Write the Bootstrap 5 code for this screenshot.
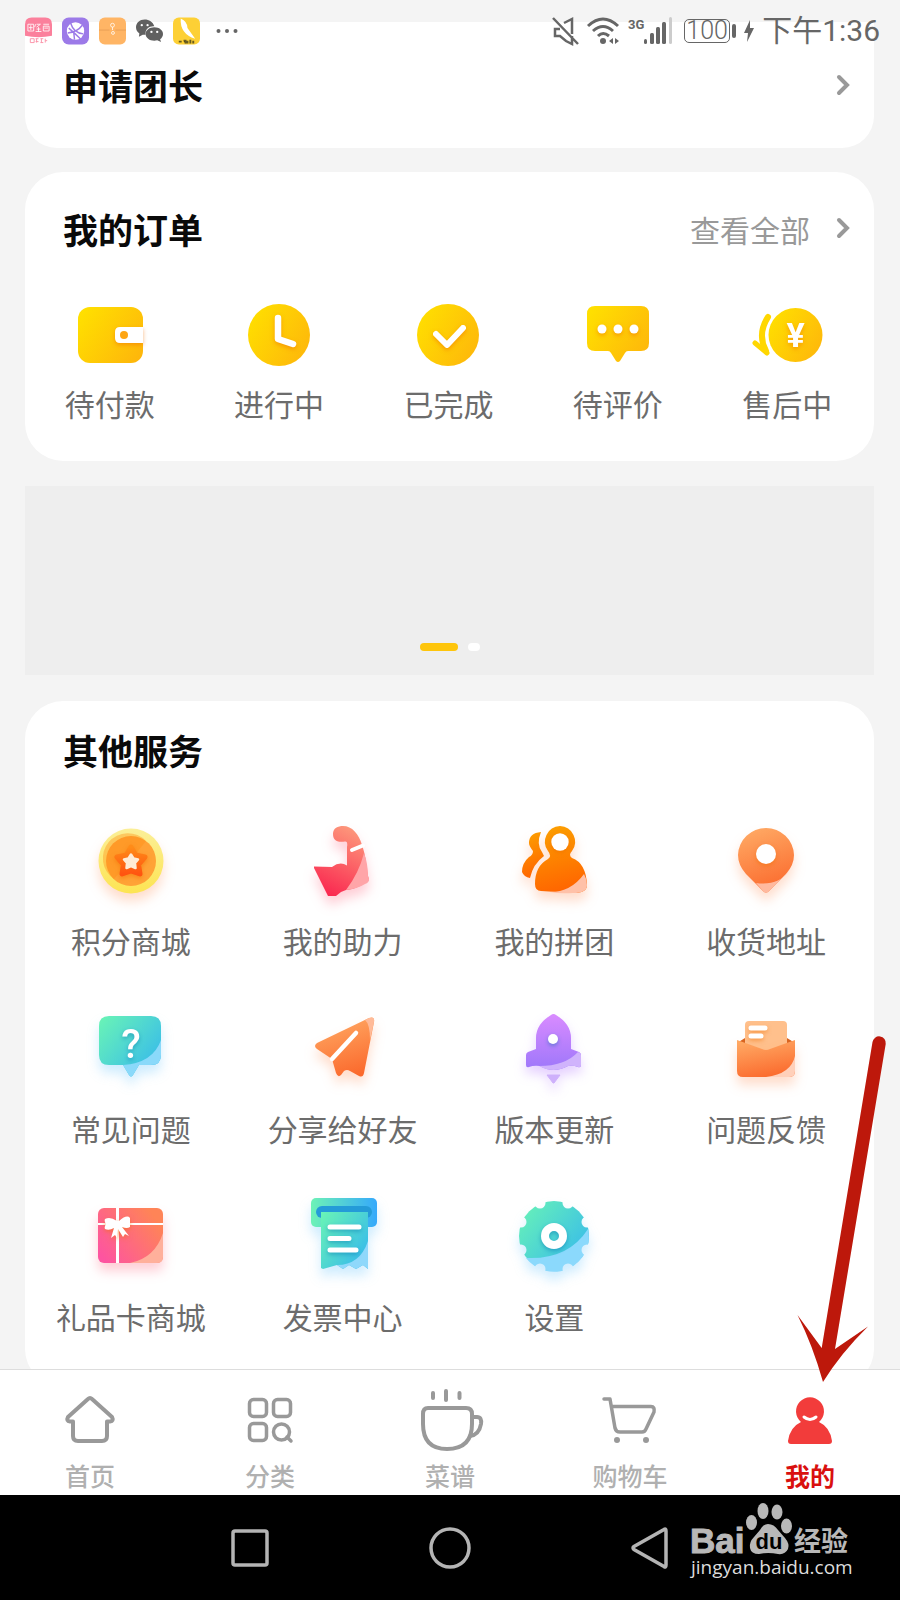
<!DOCTYPE html>
<html lang="zh-CN">
<head>
<meta charset="utf-8">
<meta name="viewport" content="width=device-width, initial-scale=1">
<title>我的</title>
<link rel="stylesheet" href="https://cdn.jsdelivr.net/npm/bootstrap@5.3.0/dist/css/bootstrap.min.css">
<style>
body{background:#f4f4f4;font-family:"Noto Sans CJK SC",sans-serif;color:#6c6c6c;min-height:100vh}
a{color:inherit;text-decoration:none}
svg{display:block;overflow:visible;flex:none}
.page-main{padding:22px 26px 24px 25px;display:flex;flex-direction:column;gap:24px}
.panel{background:#fff;border-radius:38px}
.panel-first{border-radius:0 0 32px 32px;padding:38px 0}
.panel-orders{padding:32px 0 35px}
.panel-services{padding:24px 0 48px}
.panel-head{height:50px;padding:0 25px 0 38px}
.panel-head h2{font-size:35px;line-height:50px;font-weight:700;color:#0a0a0a;margin:0}
.view-all{font-size:30px;line-height:45px;color:#999;gap:27px}
.tile{display:flex;flex-direction:column;align-items:center;gap:6px;font-size:30px;line-height:45px;white-space:nowrap}
.orders,.services{margin:41px 2px 0 0}
.services{row-gap:41px}
.banner{background:#eee;height:189px;margin-top:1px;margin-bottom:2px;padding-bottom:24px;gap:10px}
.banner button{height:8px;width:12px;border:0;padding:0;border-radius:4px;background:#fff}
.banner button.on{width:38px;background:#fec50b}
.status{padding:13px 20px 0 25px;height:50px;color:#666;z-index:1031}
.app-icons{gap:10px;height:36px}
.app-icons svg{width:27px}
.sys-icons{height:36px}
.battery{width:46px;height:24px;border:1px solid #666;border-radius:5px;font:300 25px/22px Roboto,sans-serif;text-align:center;margin-left:12px;margin-right:2px}
.cap{width:4px;height:14px;background:#666;border-radius:2px}
.clock{font-family:Roboto,"Noto Sans CJK SC",sans-serif;font-size:30px;line-height:36px;font-weight:400}
.tabbar{background:#fff;border-top:1px solid #ddd;padding-top:18px}
.tabbar a{flex:1 1 0;display:flex;flex-direction:column;align-items:center;gap:6px;font-size:25px;line-height:34px;color:#b0b0b0;height:107px;font-weight:500}
.tabbar a.current{color:#d9100f;font-weight:700}
.sysbar{background:#000;height:105px;gap:160px}
.sysbar button{border:0;background:none;padding:0;width:40px;height:40px}
.watermark{right:48px;bottom:20px}
.pointer{position:fixed;right:10px;bottom:210px;z-index:1040;pointer-events:none}
.sh-orange{filter:drop-shadow(0 8px 6px rgba(255,120,50,.25))}
.sh-pink{filter:drop-shadow(0 8px 6px rgba(255,60,90,.25))}
.sh-blue{filter:drop-shadow(0 8px 6px rgba(60,180,250,.25))}
.sh-purple{filter:drop-shadow(0 7px 6px rgba(170,100,255,.3))}
.sh-in{filter:drop-shadow(0 2px 2px rgba(240,110,0,.5))}
.sh-in-blue{filter:drop-shadow(0 2px 2px rgba(0,110,170,.45))}
</style>
</head>
<body>
<svg width="0" height="0" class="position-absolute" aria-hidden="true">
<defs>
<linearGradient id="gy" x1="0" y1=".2" x2="1" y2=".8"><stop offset="0" stop-color="#ffdf00"/><stop offset="1" stop-color="#feb70b"/></linearGradient>
<linearGradient id="gt" x1="0" y1="0" x2="1" y2=".8"><stop offset="0" stop-color="#6af5b5"/><stop offset="1" stop-color="#36b9ec"/></linearGradient>
<linearGradient id="gh" x1="0" y1="0" x2="1" y2="0"><stop offset="0" stop-color="#6df2b6"/><stop offset="1" stop-color="#35a9fb"/></linearGradient>
<linearGradient id="go" x1=".3" y1="0" x2=".6" y2="1"><stop offset="0" stop-color="#ffa863"/><stop offset="1" stop-color="#fb6a2d"/></linearGradient>
<linearGradient id="gp" x1=".2" y1="0" x2=".4" y2="1"><stop offset="0" stop-color="#fca000"/><stop offset="1" stop-color="#ff6500"/></linearGradient>
<linearGradient id="gr" x1=".7" y1="0" x2=".3" y2="1"><stop offset="0" stop-color="#fd9a7c"/><stop offset="1" stop-color="#fa2850"/></linearGradient>
<linearGradient id="gg" x1="0" y1=".8" x2=".9" y2=".2"><stop offset="0" stop-color="#fd54a0"/><stop offset="1" stop-color="#ff8457"/></linearGradient>
<linearGradient id="gv" x1="0" y1="0" x2="0" y2="1"><stop offset="0" stop-color="#d98bff"/><stop offset="1" stop-color="#9d77fa"/></linearGradient>
<linearGradient id="gc" x1="0" y1="0" x2="0" y2="1"><stop offset="0" stop-color="#fbef98"/><stop offset="1" stop-color="#fde452"/></linearGradient>
<linearGradient id="gs" x1="0" y1="0" x2="0" y2="1"><stop offset="0" stop-color="#ff8c18"/><stop offset="1" stop-color="#ff5410"/></linearGradient>
</defs>
</svg>

<header class="status position-absolute top-0 start-0 w-100 d-flex justify-content-between align-items-start">
<div class="app-icons d-flex align-items-center">
<svg width="28" height="28" viewBox="0 0 28 28"><path d="M0 19V7Q0 0 7 0H21Q28 0 28 7V19Q14 22 0 19Z" fill="#fb809c"/><g fill="none" stroke="#fff" stroke-opacity=".85"><path d="M3 7h6v7h-6zM4 10.500h4M6 8v5M11 7l-1 3M12 7h4l-4 3M14 10v5M12 12h4M11 14.500h6M19 7h6M19 9h6v5h-6zM20 11h4"/></g><g fill="none" stroke="#fb94aa"><path d="M5.500 22h4v4h-4zM11 22h3M11 25h3M12 22v4M16 22h3M16 26h3M17 22v4M21 22v4M21 24h2"/></g></svg>
<svg width="28" height="28" viewBox="0 0 28 28"><rect width="28" height="28" rx="7" fill="#9c7ae8"/><circle cx="14" cy="14" r="9" fill="#fff"/><path d="M9 6Q12 16 22 17M6 16Q16 15 21 8M12 14L13 23M7 11Q14 17 19 22" fill="none" stroke="#9c7ae8" stroke-width="1.500"/></svg>
<svg width="28" height="28" viewBox="0 0 28 28"><rect width="28" height="28" rx="6" fill="#ffb565"/><path d="M0 13H11M17 13H28" stroke="#e99e55"/><g fill="none" stroke="#fff" stroke-opacity=".8"><circle cx="14" cy="8" r="2"/><path d="M14 10v3"/><circle cx="14.500" cy="16" r="1.500"/></g></svg>
<svg width="28" height="28" viewBox="0 0 28 28" fill="#606060"><path d="M9 2C4 2 0 5.500 0 10c0 3 1.500 5 3.500 6.500L3 20l4-2h3c-1-6 4-9.500 9-9C17.500 4.500 13.500 2 9 2Z"/><path d="M19 10c-5 0-9 3-9 7s4 7 9 7l3-.5 4 2-1-3c2-1.500 3-3.500 3-5.500 0-4-4-7-9-7Z"/><g fill="#fff"><circle cx="6" cy="8" r="1.200"/><circle cx="12" cy="8" r="1.200"/><circle cx="16" cy="15" r="1.200"/><circle cx="22" cy="15" r="1.200"/></g></svg>
<svg width="28" height="28" viewBox="0 0 28 28"><rect width="28" height="28" rx="6" fill="#fdd035"/><path d="M8 1Q15 4 15 11L23 22Q7 17 8 1Z" fill="#fff"/><path d="M6 25h3M11 24h2v3M15 24v3M17 24h2M17 26h2M21 24v3" stroke="#695d20" stroke-width="2"/></svg>
<svg class="ms-1" width="22" height="28" viewBox="0 0 22 28" fill="#666"><circle cx="2" cy="14" r="2"/><circle cx="10.500" cy="14" r="2"/><circle cx="19" cy="14" r="2"/></svg>
</div>
<div class="sys-icons d-flex align-items-center">
<svg class="me-2" width="27" height="28" viewBox="0 0 27 28" fill="none" stroke="#666" stroke-width="2.500"><path d="M1 1L26 27M8 12H3v7h5l6 5 6 3v-8M12 6l8-4v15"/></svg>
<svg class="me-2" width="33" height="28" viewBox="0 0 33 28" fill="none" stroke="#666" stroke-width="3"><path d="M1 9Q16-5 31 9M6 14Q16 5 26 14M11 19Q16 14 22 19"/><circle cx="16" cy="24" r="3" fill="#666" stroke="none"/><path d="M26 21v6l-4-3ZM28 21v6l4-3Z" fill="#666" stroke="none"/></svg>
<svg width="44" height="28" viewBox="0 0 44 28" fill="#666"><text x="0" y="12" font-family="Roboto,sans-serif" font-size="13" font-weight="700">3G</text><rect x="16" y="22" width="3" height="5" rx="1.500"/><rect x="22" y="16" width="4" height="11" rx="1.500"/><rect x="28" y="10" width="4" height="17" rx="1.500"/><rect x="34" y="5" width="4" height="22" rx="1.500"/><rect x="41" y="0" width="3" height="27" rx="1.500" fill="#ccc"/></svg>
<span class="battery">100</span><span class="cap"></span>
<svg class="mx-2" width="10" height="22" viewBox="0 0 10 22" fill="#666"><path d="M6 0L0 13H4L3 22L10 8H6Z"/></svg>
<span class="clock">下午1:36</span>
</div>
</header>

<main class="page-main">
<section class="panel panel-first">
<a href="#" class="panel-head d-flex align-items-center justify-content-between"><h2>申请团长</h2>
<svg width="12" height="20" viewBox="0 0 12 20"><path d="M2 2L10 10L2 18" fill="none" stroke="#999" stroke-width="4" stroke-linecap="round"/></svg></a>
</section>

<section class="panel panel-orders">
<div class="panel-head d-flex align-items-center justify-content-between"><h2>我的订单</h2>
<a href="#" class="view-all d-flex align-items-center">查看全部<svg width="12" height="20" viewBox="0 0 12 20"><path d="M2 1L10 9L2 17" fill="none" stroke="#999" stroke-width="4" stroke-linecap="round"/></svg></a></div>
<div class="orders row row-cols-5 g-0">
<a href="#" class="tile col"><svg width="80" height="80" viewBox="0 0 80 80"><rect x="8" y="12" width="65" height="56" rx="12" fill="url(#gy)"/><path class="sh-in" d="M73 32H50q-5 0-5 5v6q0 5 5 5H73Z" fill="#fff"/><circle cx="54" cy="40" r="4" fill="#fda514"/></svg>待付款</a>
<a href="#" class="tile col"><svg width="80" height="80" viewBox="0 0 80 80"><circle cx="40" cy="40" r="31" fill="url(#gy)"/><path class="sh-in" d="M39 23V44L54 49" fill="none" stroke="#fff" stroke-width="6.500" stroke-linecap="round" stroke-linejoin="round"/></svg>进行中</a>
<a href="#" class="tile col"><svg width="80" height="80" viewBox="0 0 80 80"><circle cx="40" cy="40" r="31" fill="url(#gy)"/><path class="sh-in" d="M28 39L39 50L55 33" fill="none" stroke="#fff" stroke-width="6" stroke-linecap="round" stroke-linejoin="round"/></svg>已完成</a>
<a href="#" class="tile col"><svg width="80" height="80" viewBox="0 0 80 80"><path d="M17 11H63q8 0 8 8V48q0 8-8 8H50q-2 0-3 2L42 66q-2 2-4 0L33 58q-1-2-3-2H17q-8 0-8-8V19q0-8 8-8Z" fill="url(#gy)"/><g class="sh-in" fill="#fff"><circle cx="24" cy="34" r="4.500"/><circle cx="40" cy="34" r="4.500"/><circle cx="56" cy="34" r="4.500"/></g></svg>待评价</a>
<a href="#" class="tile col"><svg width="80" height="80" viewBox="0 0 80 80"><circle cx="48.500" cy="40" r="27" fill="url(#gy)"/><path d="M21 22Q10 39 19 56" fill="none" stroke="#ffd700" stroke-width="6" stroke-linecap="round"/><path d="M8 48L20 58" fill="none" stroke="#ffd700" stroke-width="5" stroke-linecap="round"/><text class="sh-in" x="48.500" y="52" text-anchor="middle" font-family="Roboto,sans-serif" font-weight="700" font-size="34" fill="#fff">¥</text></svg>售后中</a>
</div>
</section>

<section class="banner d-flex justify-content-center align-items-end"><button class="on" type="button" aria-label="第1张"></button><button type="button" aria-label="第2张"></button></section>

<section class="panel panel-services">
<div class="panel-head"><h2>其他服务</h2></div>
<div class="services row row-cols-4 gx-0">
<a href="#" class="tile col"><svg width="96" height="96" viewBox="0 0 96 96"><circle class="sh-orange" cx="48" cy="45" r="32.500" fill="url(#gc)"/><circle cx="48" cy="45" r="25" fill="#ffa236"/><path d="M63 25Q48 45 31 63A25 25 0 1 1 63 25Z" fill="#ff8e13" opacity=".4"/><path class="sh-in" d="M48 31L52.500 39L62 41L55.500 48.500L57 58L48 55L39 58L40.500 48.500L34 41L43.500 39Z" fill="url(#gs)" stroke="url(#gs)" stroke-width="5" stroke-linejoin="round"/><path d="M48 38.500L50.500 42.500L55 43.500L52 47L52.500 52L48 50L43.500 52L44 47L41 43.500L45.500 42.500Z" fill="#ffecd5" stroke="#ffecd5" stroke-linejoin="round" stroke-width="2.500"/></svg>积分商城</a>
<a href="#" class="tile col"><svg width="96" height="96" viewBox="0 0 96 96"><g class="sh-pink"><path d="M38 18C38 12 43 10 48 10C57 10 64 18 67 29C69 35 71 43 71 47L73 60Q75 66 70 67Q61 73 51 74L46 76L41 80H33L19 52V50.500L37 51Q45 45 52 49.500V31Q53 25 50 25.500C46 26 38 27 38 18Z" fill="url(#gr)"/><path d="M69 37Q64 57 51 74Q62 73 70 68Q76 66 73 60Q73 48 69 37Z" fill="#ffa5a8"/></g><path d="M57 34L68 29.500" stroke="#fff" stroke-width="4" stroke-linecap="round"/></svg>我的助力</a>
<a href="#" class="tile col"><svg width="96" height="96" viewBox="0 0 96 96"><g class="sh-orange" fill="url(#gp)"><path d="M35 16Q23 17 23 27Q23 30 27 35Q27 39 23 41Q16 47 16 56Q18 61 24 62Q27 48 38 40L36 36Q30 28 35 16Z"/><path d="M54 10A15.700 15.700 0 0 0 42 35Q46 40 42 43Q29 50 29 68Q29 75 35 75L67 77Q81 77 81 69Q80 47 66 42Q62 39 66 35A15.700 15.700 0 0 0 54 10Z"/></g><path d="M78 58Q65 76 44 76Q54 78 67 77Q81 77 81 69Q81 63 78 58Z" fill="#ffc1a8"/><circle class="sh-in" cx="54" cy="26" r="8.700" fill="#fff"/></svg>我的拼团</a>
<a href="#" class="tile col"><svg width="96" height="96" viewBox="0 0 96 96"><g class="sh-orange"><path d="M48 12A28 28 0 0 1 76 39Q76 49 68 58L51 75Q48 78 45 75L28 58Q20 49 20 39A28 28 0 0 1 48 12Z" fill="url(#go)"/><path d="M71 55Q60 70 38 67L45 75Q48 78 51 75Z" fill="#ffb99f"/></g><circle class="sh-in" cx="48" cy="38" r="10" fill="#fff"/></svg>收货地址</a>

<a href="#" class="tile col"><svg width="96" height="96" viewBox="0 0 96 96"><g class="sh-blue"><path d="M26 12H68q10 0 10 10V51q0 10-10 10H56L50 71q-2 3-4 0L40 61H26q-10 0-10-10V22q0-10 10-10Z" fill="url(#gt)"/><path d="M78 36Q70 59 40 61L46 71q2 3 4 0L56 61H68q10 0 10-10Z" fill="#8ad9fa"/></g><text class="sh-in-blue" x="48" y="54" text-anchor="middle" font-family="Roboto,sans-serif" font-weight="500" font-size="40" fill="#fff">?</text></svg>常见问题</a>
<a href="#" class="tile col"><svg width="96" height="96" viewBox="0 0 96 96"><g class="sh-orange"><path d="M74 14L22 39Q18 42 22 45L37 55L41 69Q43 74 46 71L49 67Q52 65 55 67L64 72Q68 74 69 69L79 18Q80 12 74 14Z" fill="url(#go)"/><path d="M74 14L70 16Q75 20 75 36L79 18Q80 12 74 14Z" fill="#ffba98"/></g><path d="M37 55L61 29" stroke="#fff" stroke-width="4.500" stroke-linecap="round"/></svg>分享给好友</a>
<a href="#" class="tile col"><svg width="96" height="96" viewBox="0 0 96 96"><g class="sh-purple"><path d="M45 11Q47.500 9 50 11Q65 20 65 34V45L73 48Q75 49 75 51V61Q75 64 72 63Q67 61 62 62Q47 70 34 62Q28 61 23 63Q20 64 20 61V51Q20 49 22 48L30 45V34Q30 20 45 11Z" fill="url(#gv)"/><path d="M72 48Q59 62 33 62Q47 70 62 62Q67 61 72 63Q75 64 75 61V51Q75 49 72 48Z" fill="#d0b3fc"/><path d="M41 71H54L48 79H47Z" fill="#ceb0fb" stroke="#ceb0fb" stroke-linejoin="round"/></g><circle class="sh-in-blue" cx="47" cy="35" r="5" fill="#fff"/></svg>版本更新</a>
<a href="#" class="tile col"><svg width="96" height="96" viewBox="0 0 96 96"><path d="M19 39L27 34V42ZM77 39L69 34V42Z" fill="#d96521"/><rect x="27" y="17" width="42" height="38" rx="4" fill="#ffc08c"/><g class="sh-orange"><path d="M19 36L44 45Q48 47 52 45L77 36V67q0 6-6 6H25q-6 0-6-6Z" fill="url(#go)"/><path d="M77 52Q73 70 48 73H71q6 0 6-6Z" fill="#ffd0ba"/></g><path class="sh-in" d="M33 24H47M33 32H43" stroke="#fff" stroke-width="5" stroke-linecap="round"/></svg>问题反馈</a>

<a href="#" class="tile col"><svg width="96" height="96" viewBox="0 0 96 96"><g class="sh-pink"><rect x="15" y="16" width="65" height="55" rx="6" fill="url(#gg)"/><path d="M80 41Q72 66 47 71H74q6 0 6-6Z" fill="#ffb09b"/></g><path d="M34.500 16V71" stroke="#fff" stroke-width="3"/><path d="M15 32H80" stroke="#fff" stroke-width="2"/><path class="sh-in" d="M34 29Q27 24 22 27Q21 29 23 32Q21 35 22 37Q26 39 31 36L28 46L32 43L34 46L35 37L40 45L42 42L46 44L39 35Q44 37 47 35V26Q44 22 36 29Z" fill="#fff"/></svg>礼品卡商城</a>
<a href="#" class="tile col"><svg width="96" height="96" viewBox="0 0 96 96"><g class="sh-blue"><rect x="16" y="6" width="66" height="29" rx="5" fill="url(#gh)"/><rect x="21" y="14" width="56" height="12" rx="6" fill="#249bd8"/><path d="M26 20H73V77L68 73L61 77L54 73L48 77L42 73L28 77L26 76Z" fill="url(#gt)"/><path d="M73 49Q65 73 42 73L48 77L54 73L61 77L68 73L73 77Z" fill="#8fd8fb"/></g><path class="sh-in-blue" d="M35 35H64M35 46.500H54M35 58H61" stroke="#fff" stroke-width="5" stroke-linecap="round"/></svg>发票中心</a>
<a href="#" class="tile col"><svg width="96" height="96" viewBox="0 0 96 96"><mask id="teeth"><rect width="96" height="96" fill="#fff"/><g><circle cx="81" cy="58" r="5.500"/><circle cx="81" cy="30" r="5.500"/><circle cx="62" cy="11" r="5.500"/><circle cx="34" cy="11" r="5.500"/><circle cx="15" cy="30" r="5.500"/><circle cx="15" cy="58" r="5.500"/><circle cx="34" cy="77" r="5.500"/><circle cx="62" cy="77" r="5.500"/></g></mask><g class="sh-blue"><g mask="url(#teeth)"><circle cx="48" cy="44" r="35" fill="url(#gt)"/><path d="M82 37Q62 68 20 66A35 35 0 0 0 82 37Z" fill="#8bd9fc"/></g></g><circle class="sh-in-blue" cx="48" cy="44" r="9" fill="none" stroke="#fff" stroke-width="8"/></svg>设置</a>
</div>
</section>
</main>

<footer class="fixed-bottom">
<nav class="tabbar d-flex">
<a href="#"><svg width="64" height="64" viewBox="0 0 64 64" fill="none" stroke="#999" stroke-width="4" stroke-linejoin="round"><path d="M30 11Q32 9 34 11L54 29Q56 33 52 33.500H49V48Q49 53 44 53H20Q15 53 15 48V33.500H12Q8 33 10 29Z"/></svg>首页</a>
<a href="#"><svg width="64" height="64" viewBox="0 0 64 64" fill="none" stroke="#999" stroke-width="3.500"><rect x="11.500" y="11.500" width="17" height="17" rx="4"/><rect x="35.500" y="11.500" width="17" height="17" rx="4"/><rect x="11.500" y="35.500" width="17" height="17" rx="4"/><circle cx="43.500" cy="44" r="8"/><path d="M49 49L53 53" stroke-linecap="round"/></svg>分类</a>
<a href="#"><svg width="64" height="64" viewBox="0 0 64 64" fill="none" stroke="#999" stroke-width="4"><path d="M10 20H48Q54 20 54 26V36Q54 61 29 61Q5 61 5 36V26Q5 20 10 20Z"/><path d="M54 29H59Q64 29 63 36Q61 47 52 48M15 5V10M28 3V12M41.500 5V10" stroke-linecap="round"/></svg>菜谱</a>
<a href="#"><svg width="64" height="64" viewBox="0 0 64 64" fill="none" stroke="#999" stroke-width="3.500" stroke-linecap="round" stroke-linejoin="round"><path d="M6 11H12L17 40Q18 44 22 44H44Q47 44 48 41L56 24Q57 18.500 53 18.500H14"/><g fill="#999" stroke="none"><circle cx="19" cy="52" r="3"/><circle cx="48" cy="52" r="3"/></g></svg>购物车</a>
<a href="#" class="current" aria-current="page"><svg width="64" height="64" viewBox="0 0 64 64" fill="#f23c3b"><path d="M23 34A14 14 0 1 1 41 34Q52 39 54 53Q54 56 51 56H13Q10 56 10 53Q12 39 23 34Z"/><path d="M26 29Q32 34 38 29" fill="none" stroke="#fff" stroke-width="3" stroke-linecap="round"/></svg>我的</a>
</nav>
<div class="sysbar position-relative d-flex justify-content-center align-items-center">
<button type="button" aria-label="最近任务"><svg width="40" height="40" viewBox="0 0 40 40"><rect x="3" y="3" width="34" height="34" rx="2" fill="none" stroke="#b4b4b4" stroke-width="3.500"/></svg></button>
<button type="button" aria-label="主屏幕"><svg width="40" height="40" viewBox="0 0 40 40"><circle cx="20" cy="20" r="19" fill="none" stroke="#b4b4b4" stroke-width="3.500"/></svg></button>
<button type="button" aria-label="返回"><svg width="40" height="40" viewBox="0 0 40 40"><path d="M34 1.500Q36 0 36 3V37Q36 40 34 38.500L4 21.500Q2 20 4 18.500Z" fill="none" stroke="#b4b4b4" stroke-width="3.500"/></svg></button>
<svg class="watermark position-absolute" width="162" height="78" viewBox="0 0 162 78" fill="#b8b8b8">
<text x="0" y="51" font-family="Liberation Sans,sans-serif" font-weight="700" font-size="35" stroke="#b8b8b8">Bai</text>
<ellipse cx="61.500" cy="20.500" rx="5.500" ry="7.500"/><ellipse cx="73" cy="9" rx="5.500" ry="8"/><ellipse cx="87" cy="10" rx="5.500" ry="7.500"/><ellipse cx="96.500" cy="24" rx="5.500" ry="7.500"/><path d="M78 22Q84 22 88 28L95 36Q100 42 98 47Q95 53 88 52Q78 50 69 52Q61 52 60 46Q59 40 64 35L70 28Q73 22 78 22Z"/>
<text x="79" y="47" text-anchor="middle" font-family="Liberation Sans,sans-serif" font-weight="700" font-size="22" fill="#000">du</text>
<text x="104" y="49" font-family="Noto Sans CJK SC,sans-serif" font-weight="700" font-size="27">经验</text>
<text x="1" y="72" font-family="Open Sans,sans-serif" font-size="19" fill="#ddd">jingyan.baidu.com</text>
</svg>
</div>
</footer>

<svg class="pointer" width="100" height="360" viewBox="790 1030 100 360" aria-hidden="true"><path d="M872.500 1042A6.600 6.600 0 0 1 885.700 1044L835 1349L868 1326.500Q841 1353 823 1382Q813 1346 797.500 1315L821.700 1348Z" fill="#bd180b"/></svg>
<script src="https://cdn.jsdelivr.net/npm/bootstrap@5.3.0/dist/js/bootstrap.bundle.min.js"></script>
</body>
</html>
